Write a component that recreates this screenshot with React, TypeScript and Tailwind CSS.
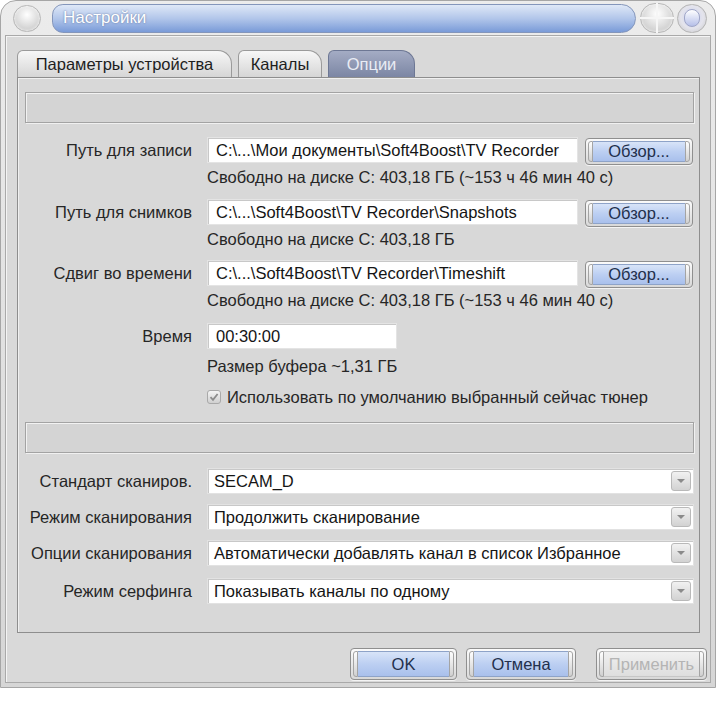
import React from 'react';

const font = "font-['Liberation_Sans',Arial,sans-serif]";

function GroupBar() {
  return (
    <div className="h-[31px] border border-[#a3a3a3] bg-[#d4d4d4] shadow-[inset_1px_1px_0_#f2f2f2,1px_1px_0_#f0f0f0]" />
  );
}

function Field({ value, className = '' }: { value: string; className?: string }) {
  return (
    <div
      className={`h-[26px] flex items-center px-[8px] bg-white border border-[#e4e4e4] shadow-[inset_1px_1px_0_#c8c8c8] text-[#151515] whitespace-nowrap overflow-hidden ${className}`}
    >
      {value}
    </div>
  );
}

function BlueButton({ label, className = '', disabled = false }: { label: string; className?: string; disabled?: boolean }) {
  return (
    <div
      className={`flex p-[2px] rounded-[4px] border border-[#8f8f8f] bg-gradient-to-b from-[#fbfbfb] to-[#d8d8d8] shadow-[0_1px_0_#f4f4f4] ${className}`}
    >
      <div className="w-[5px] rounded-l-[3px] border border-[#a4a4a4] bg-gradient-to-b from-[#ffffff] to-[#d0d0d0]" />
      <div
        className={`flex-1 flex items-center justify-center border-y ${
          disabled
            ? 'border-[#c6c6c6] bg-gradient-to-b from-[#f0f0f0] to-[#dedede] text-[#b4b4b4]'
            : 'border-[#8ea3c8] bg-gradient-to-b from-[#d8e4f8] via-[#bccff2] to-[#a9c0ec] text-[#23304c]'
        }`}
      >
        {label}
      </div>
      <div className="w-[5px] rounded-r-[3px] border border-[#a4a4a4] bg-gradient-to-b from-[#ffffff] to-[#d0d0d0]" />
    </div>
  );
}

function PathRow({ label, value, free, className = '' }: { label: string; value: string; free: string; className?: string }) {
  return (
    <div className={className}>
      <div className="flex items-start h-[27px]">
        <div className="w-[167px] h-[26px] leading-[26px] text-right text-[#262626] whitespace-nowrap">{label}</div>
        <Field value={value} className="ml-[15px] w-[371px]" />
        <BlueButton label="Обзор..." className="ml-[7px] w-[108px] h-[27px] mt-[1px]" />
      </div>
      <div className="ml-[182px] mt-[4px] h-[18px] leading-[18px] text-[#262626] whitespace-nowrap">{free}</div>
    </div>
  );
}

function Select({ label, value, className = '' }: { label: string; value: string; className?: string }) {
  return (
    <div className={`flex items-center ${className}`}>
      <div className="w-[167px] text-right text-[#262626] whitespace-nowrap">{label}</div>
      <div className="ml-[15px] flex-1 h-[26px] flex items-center bg-white border border-[#e2e2e2] shadow-[inset_1px_1px_0_#c8c8c8] pl-[6px] pr-[2px]">
        <span className="flex-1 text-[#151515] whitespace-nowrap">{value}</span>
        <div className="w-[20px] h-[20px] rounded-[3px] border border-[#b9b9b9] bg-gradient-to-b from-[#f2f2f2] to-[#d2d2d2] flex items-center justify-center">
          <div className="w-0 h-0 border-l-[4px] border-r-[4px] border-t-[4px] border-l-transparent border-r-transparent border-t-[#8a8a8a]" />
        </div>
      </div>
    </div>
  );
}

function Tab({ label, active = false, className = '' }: { label: string; active?: boolean; className?: string }) {
  return (
    <div
      className={`h-[27px] flex items-center justify-center rounded-tl-[6px] rounded-tr-[14px] border border-b-0 ${
        active
          ? 'border-[#6d7794] bg-gradient-to-b from-[#a4acc4] to-[#7c86a4] text-[#e9ecf4]'
          : 'border-[#9a9a9a] bg-gradient-to-b from-[#f7f7f7] to-[#d6d6d6] text-[#1e1e1e]'
      } ${className}`}
    >
      {label}
    </div>
  );
}

function Circle({ className = '' }: { className?: string }) {
  return (
    <div
      className={`rounded-full border border-[#b8b8b8] bg-[radial-gradient(circle_at_50%_35%,#ffffff,#d8d8d8_60%,#bdbdbd)] shadow-[inset_0_0_3px_#ffffff] ${className}`}
    />
  );
}

export default function App() {
  return (
    <div className={`w-[725px] h-[701px] bg-white ${font} text-[16.5px]`}>
      <div className="w-[716px] h-[688px] flex flex-col rounded-t-[16px] border border-[#a6a6a6] bg-gradient-to-b from-[#ececec] to-[#d6d6d6]">
        {/* title bar */}
        <div className="h-[34px] flex items-center pl-[12px] pr-[4px]">
          <Circle className="w-[28px] h-[27px]" />
          <div className="ml-[11px] w-[584px] h-[29px] flex items-center pl-[10px] rounded-l-[12px] rounded-r-[16px] border border-[#8496bb] bg-gradient-to-b from-[#dfe8f7] via-[#b2c6ea] to-[#7a9bd8] text-white text-[17px] [text-shadow:0_0_2px_#5a6f9a]">
            Настройки
          </div>
          <div className="ml-[4px] w-[34px] h-[30px] relative">
            <Circle className="w-[34px] h-[30px]" />
            <div className="absolute left-[16px] top-0 w-[2px] h-[30px] bg-[#f6f6f6]" />
            <div className="absolute left-0 top-[14px] w-[34px] h-[2px] bg-[#f6f6f6]" />
          </div>
          <div className="ml-[3px] w-[30px] h-[29px] rounded-full border border-[#b4b4b4] bg-[radial-gradient(circle_at_50%_45%,#c9cff0,#e4e4ec_55%,#c4c4c4)] flex items-center justify-center">
            <div className="w-[16px] h-[18px] rounded-full border border-[#9fa6c8] bg-gradient-to-b from-[#ffffff] to-[#b6bfe8]" />
          </div>
        </div>

        {/* body */}
        <div className="flex-1 mx-[4px] mb-[4px] border border-[#a9a9a9] bg-[#d9d9d9] pl-[11px] pr-[3px] pt-[14px] flex flex-col shadow-[inset_1px_1px_0_#f4f4f4]">
          <div className="flex items-end h-[27px] mr-[7px]">
            <Tab label="Параметры устройства" className="w-[215px]" />
            <Tab label="Каналы" className="ml-[6px] w-[84px]" />
            <Tab label="Опции" active className="ml-[6px] w-[87px]" />
          </div>

          <div className="mr-[7px] h-[556px] border border-[#8e8e8e] bg-[#d8d8d8] pl-[7px] pr-[5px] pt-[14px] shadow-[inset_1px_1px_0_#f0f0f0]">
            <GroupBar />

            <PathRow
              className="mt-[14px]"
              label="Путь для записи"
              value="C:\...\Мои документы\Soft4Boost\TV Recorder"
              free="Свободно на диске C: 403,18 ГБ (~153 ч 46 мин 40 с)"
            />
            <PathRow
              className="mt-[13px]"
              label="Путь для снимков"
              value="C:\...\Soft4Boost\TV Recorder\Snapshots"
              free="Свободно на диске C: 403,18 ГБ"
            />
            <PathRow
              className="mt-[12px]"
              label="Сдвиг во времени"
              value="C:\...\Soft4Boost\TV Recorder\Timeshift"
              free="Свободно на диске C: 403,18 ГБ (~153 ч 46 мин 40 с)"
            />

            <div className="mt-[14px] flex items-center">
              <div className="w-[167px] text-right text-[#262626]">Время</div>
              <Field value="00:30:00" className="ml-[15px] w-[190px]" />
            </div>
            <div className="mt-[8px] ml-[182px] h-[18px] leading-[18px] text-[#262626]">Размер буфера ~1,31 ГБ</div>
            <div className="mt-[12px] ml-[182px] h-[20px] flex items-center text-[#262626]">
              <div className="w-[14px] h-[14px] rounded-[3px] border border-[#a9a9a9] bg-gradient-to-b from-[#f4f4f4] to-[#d0d0d0] flex items-center justify-center">
                <svg width="10" height="10" viewBox="0 0 10 10">
                  <path d="M1.5 5.2 L4 7.8 L8.6 2" fill="none" stroke="#8c8c8c" strokeWidth="1.8" />
                </svg>
              </div>
              <span className="ml-[6px] whitespace-nowrap">Использовать по умолчанию выбранный сейчас тюнер</span>
            </div>

            <div className="mt-[15px]">
              <GroupBar />
            </div>

            <Select className="mt-[15px]" label="Стандарт сканиров." value="SECAM_D" />
            <Select className="mt-[10px]" label="Режим сканирования" value="Продолжить сканирование" />
            <Select className="mt-[10px]" label="Опции сканирования" value="Автоматически добавлять канал в список Избранное" />
            <Select className="mt-[12px]" label="Режим серфинга" value="Показывать каналы по одному" />
          </div>

          <div className="mt-[15px] flex justify-end">
            <BlueButton label="OK" className="w-[107px] h-[32px]" />
            <BlueButton label="Отмена" className="ml-[9px] w-[110px] h-[32px]" />
            <BlueButton label="Применить" disabled className="ml-[20px] w-[111px] h-[32px]" />
          </div>
        </div>
      </div>
    </div>
  );
}
